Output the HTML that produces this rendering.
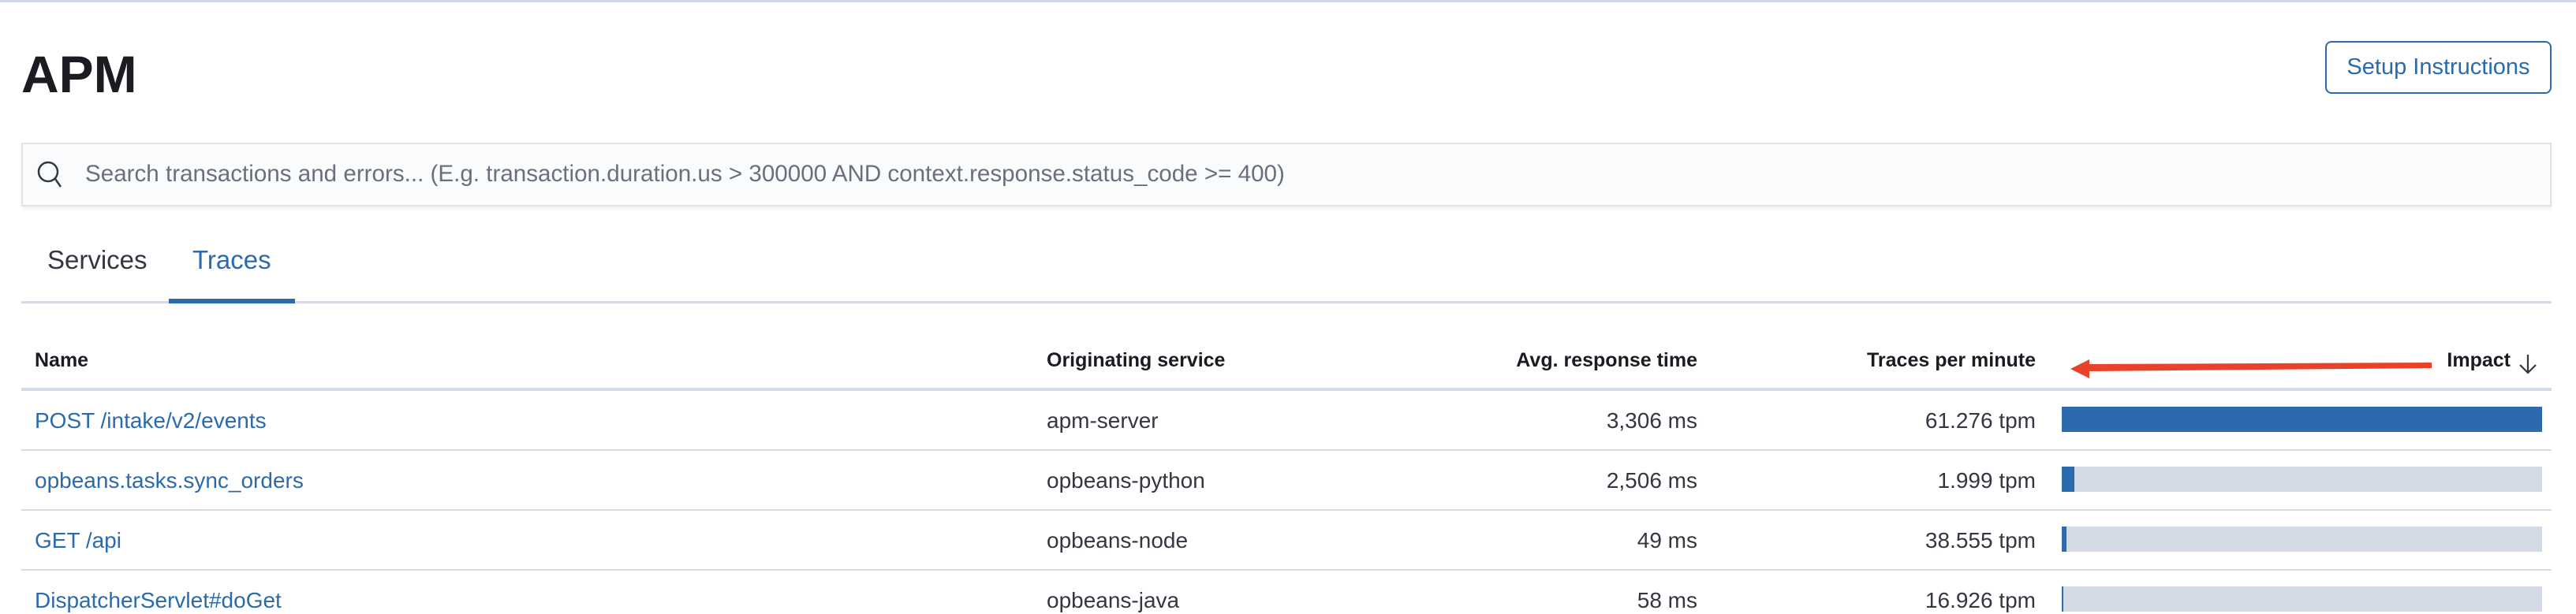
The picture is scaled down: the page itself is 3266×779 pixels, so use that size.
<!DOCTYPE html>
<html><head><meta charset="utf-8"><style>
*{margin:0;padding:0;box-sizing:border-box}
body{width:3266px;height:778px;background:#fff;font-family:"Liberation Sans",sans-serif;color:#343741;position:relative;overflow:hidden}
.a{position:absolute;white-space:nowrap}
.line{position:absolute;left:27px;width:3208px;background:#d3dae6}
.h{font-weight:bold;font-size:25px;color:#1a1c21;top:443px}
.c{font-size:28px;line-height:34px}
.lnk{color:#2b6aad}
.r{text-align:right}
.bar{position:absolute;left:2614px;width:609px;height:32px;background:#d3dae6}
.bar i{display:block;height:100%;background:#2d6aad}
</style></head><body>
<div class="a" style="left:0;top:0;width:3266px;height:3px;background:#d3dae6"></div>
<div class="a" style="left:27px;top:56px;font-size:66px;font-weight:bold;color:#1a1c21">APM</div>
<div class="a" style="left:2948px;top:52px;width:287px;height:67px;border:2px solid #2b6aad;border-radius:8px;color:#2b6aad;font-size:29px;line-height:63px;text-align:center">Setup Instructions</div>
<div class="a" style="left:27px;top:181px;width:3208px;height:81px;background:#fafbfd;border:2px solid #dfe3ea;box-shadow:0 3px 4px rgba(0,0,0,0.06)"></div>
<svg class="a" style="left:46px;top:203px" width="34" height="38" viewBox="0 0 34 38"><circle cx="15" cy="15" r="12" fill="none" stroke="#343741" stroke-width="2.5"/><line x1="24" y1="24" x2="31" y2="34" stroke="#343741" stroke-width="2.5"/></svg>
<div class="a" style="left:108px;top:204px;font-size:29.6px;color:#69707d">Search transactions and errors... (E.g. transaction.duration.us &gt; 300000 AND context.response.status_code &gt;= 400)</div>
<div class="a" style="left:60px;top:311px;font-size:33px;color:#343741">Services</div>
<div class="a" style="left:244px;top:311px;font-size:33px;color:#2b6aad">Traces</div>
<div class="line" style="top:382px;height:3px"></div>
<div class="a" style="left:214px;top:379px;width:160px;height:6px;background:#2d6aad"></div>

<div class="a h" style="left:44px">Name</div>
<div class="a h" style="left:1327px">Originating service</div>
<div class="a h r" style="left:1800px;width:352px">Avg. response time</div>
<div class="a h r" style="left:2200px;width:381px">Traces per minute</div>
<div class="a h r" style="left:2900px;width:283px">Impact</div>
<svg class="a" style="left:3192px;top:448px" width="26" height="28" viewBox="0 0 26 28"><path d="M13 2V25M3 15L13 25L23 15" fill="none" stroke="#343741" stroke-width="2.2"/></svg>
<svg class="a" style="left:2620px;top:452px" width="475" height="32" viewBox="0 0 475 32"><path d="M29 10L463 8L463 15L29 19Z" fill="#e8432a"/><path d="M5 16L29 4L29 28Z" fill="#e8432a"/></svg>
<div class="line" style="top:492px;height:4px"></div>

<div class="a c lnk" style="left:44px;top:517px">POST /intake/v2/events</div>
<div class="a c" style="left:1327px;top:517px">apm-server</div>
<div class="a c r" style="left:1900px;width:252px;top:517px">3,306 ms</div>
<div class="a c r" style="left:2300px;width:281px;top:517px">61.276 tpm</div>
<div class="bar" style="top:516px"><i style="width:609px"></i></div>
<div class="line" style="top:570px;height:2px"></div>

<div class="a c lnk" style="left:44px;top:593px">opbeans.tasks.sync_orders</div>
<div class="a c" style="left:1327px;top:593px">opbeans-python</div>
<div class="a c r" style="left:1900px;width:252px;top:593px">2,506 ms</div>
<div class="a c r" style="left:2300px;width:281px;top:593px">1.999 tpm</div>
<div class="bar" style="top:592px"><i style="width:16px"></i></div>
<div class="line" style="top:646px;height:2px"></div>

<div class="a c lnk" style="left:44px;top:669px">GET /api</div>
<div class="a c" style="left:1327px;top:669px">opbeans-node</div>
<div class="a c r" style="left:1900px;width:252px;top:669px">49 ms</div>
<div class="a c r" style="left:2300px;width:281px;top:669px">38.555 tpm</div>
<div class="bar" style="top:668px"><i style="width:6px"></i></div>
<div class="line" style="top:722px;height:2px"></div>

<div class="a c lnk" style="left:44px;top:745px">DispatcherServlet#doGet</div>
<div class="a c" style="left:1327px;top:745px">opbeans-java</div>
<div class="a c r" style="left:1900px;width:252px;top:745px">58 ms</div>
<div class="a c r" style="left:2300px;width:281px;top:745px">16.926 tpm</div>
<div class="bar" style="top:744px"><i style="width:2px"></i></div>
</body></html>
